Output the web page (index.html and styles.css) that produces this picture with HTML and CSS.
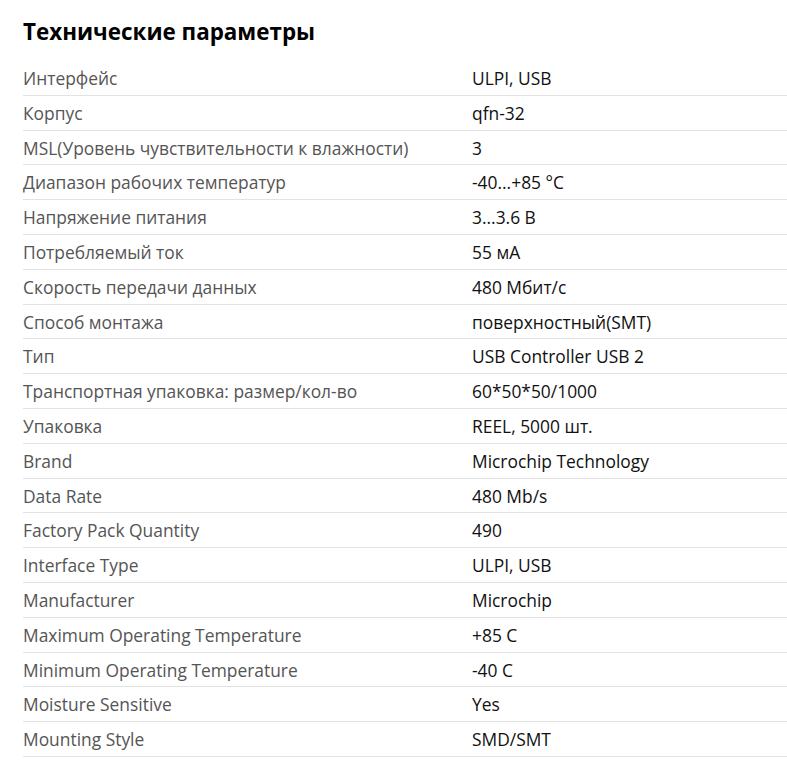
FILE: index.html
```html
<!DOCTYPE html>
<html lang="ru">
<head>
<meta charset="utf-8">
<link rel="stylesheet" href="styles.css">
</head>
<body>
<section class="specs">
  <h2 class="specs-title">Технические параметры</h2>
  <div class="specs-table">
    <div class="row"><div class="label">Интерфейс</div><div class="value">ULPI, USB</div></div>
    <div class="row"><div class="label">Корпус</div><div class="value">qfn-32</div></div>
    <div class="row"><div class="label">MSL(Уровень чувствительности к влажности)</div><div class="value">3</div></div>
    <div class="row"><div class="label">Диапазон рабочих температур</div><div class="value">-40...+85 °C</div></div>
    <div class="row"><div class="label">Напряжение питания</div><div class="value">3...3.6 В</div></div>
    <div class="row"><div class="label">Потребляемый ток</div><div class="value">55 мА</div></div>
    <div class="row"><div class="label">Скорость передачи данных</div><div class="value">480 Мбит/с</div></div>
    <div class="row"><div class="label">Способ монтажа</div><div class="value">поверхностный(SMT)</div></div>
    <div class="row"><div class="label">Тип</div><div class="value">USB Controller USB 2</div></div>
    <div class="row"><div class="label">Транспортная упаковка: размер/кол-во</div><div class="value">60*50*50/1000</div></div>
    <div class="row"><div class="label">Упаковка</div><div class="value">REEL, 5000 шт.</div></div>
    <div class="row"><div class="label">Brand</div><div class="value">Microchip Technology</div></div>
    <div class="row"><div class="label">Data Rate</div><div class="value">480 Mb/s</div></div>
    <div class="row"><div class="label">Factory Pack Quantity</div><div class="value">490</div></div>
    <div class="row"><div class="label">Interface Type</div><div class="value">ULPI, USB</div></div>
    <div class="row"><div class="label">Manufacturer</div><div class="value">Microchip</div></div>
    <div class="row"><div class="label">Maximum Operating Temperature</div><div class="value">+85 C</div></div>
    <div class="row"><div class="label">Minimum Operating Temperature</div><div class="value">-40 C</div></div>
    <div class="row"><div class="label">Moisture Sensitive</div><div class="value">Yes</div></div>
    <div class="row"><div class="label">Mounting Style</div><div class="value">SMD/SMT</div></div>
  </div>
</section>
</body>
</html>
```

FILE: styles.css
```css
html, body {
  margin: 0;
  padding: 0;
  background: #fff;
}
body {
  font-family: "Open Sans", "Liberation Sans", sans-serif;
}
.specs {
  padding: 0 0 0 23px;
}
.specs-title {
  margin: 0;
  padding-top: 17px;
  font-size: 22.4px;
  line-height: 30px;
  font-weight: 700;
  color: #000;
}
.specs-table {
  margin-top: 14px;
}
.row {
  display: grid;
  grid-template-columns: 449px 1fr;
  font-size: 17.4px;
  line-height: 21.8px;
  padding: 7px 0 5px;
  border-bottom: 1px solid #e2e2e2;
}
.label {
  color: #555;
}
.value {
  color: #111;
}
```
